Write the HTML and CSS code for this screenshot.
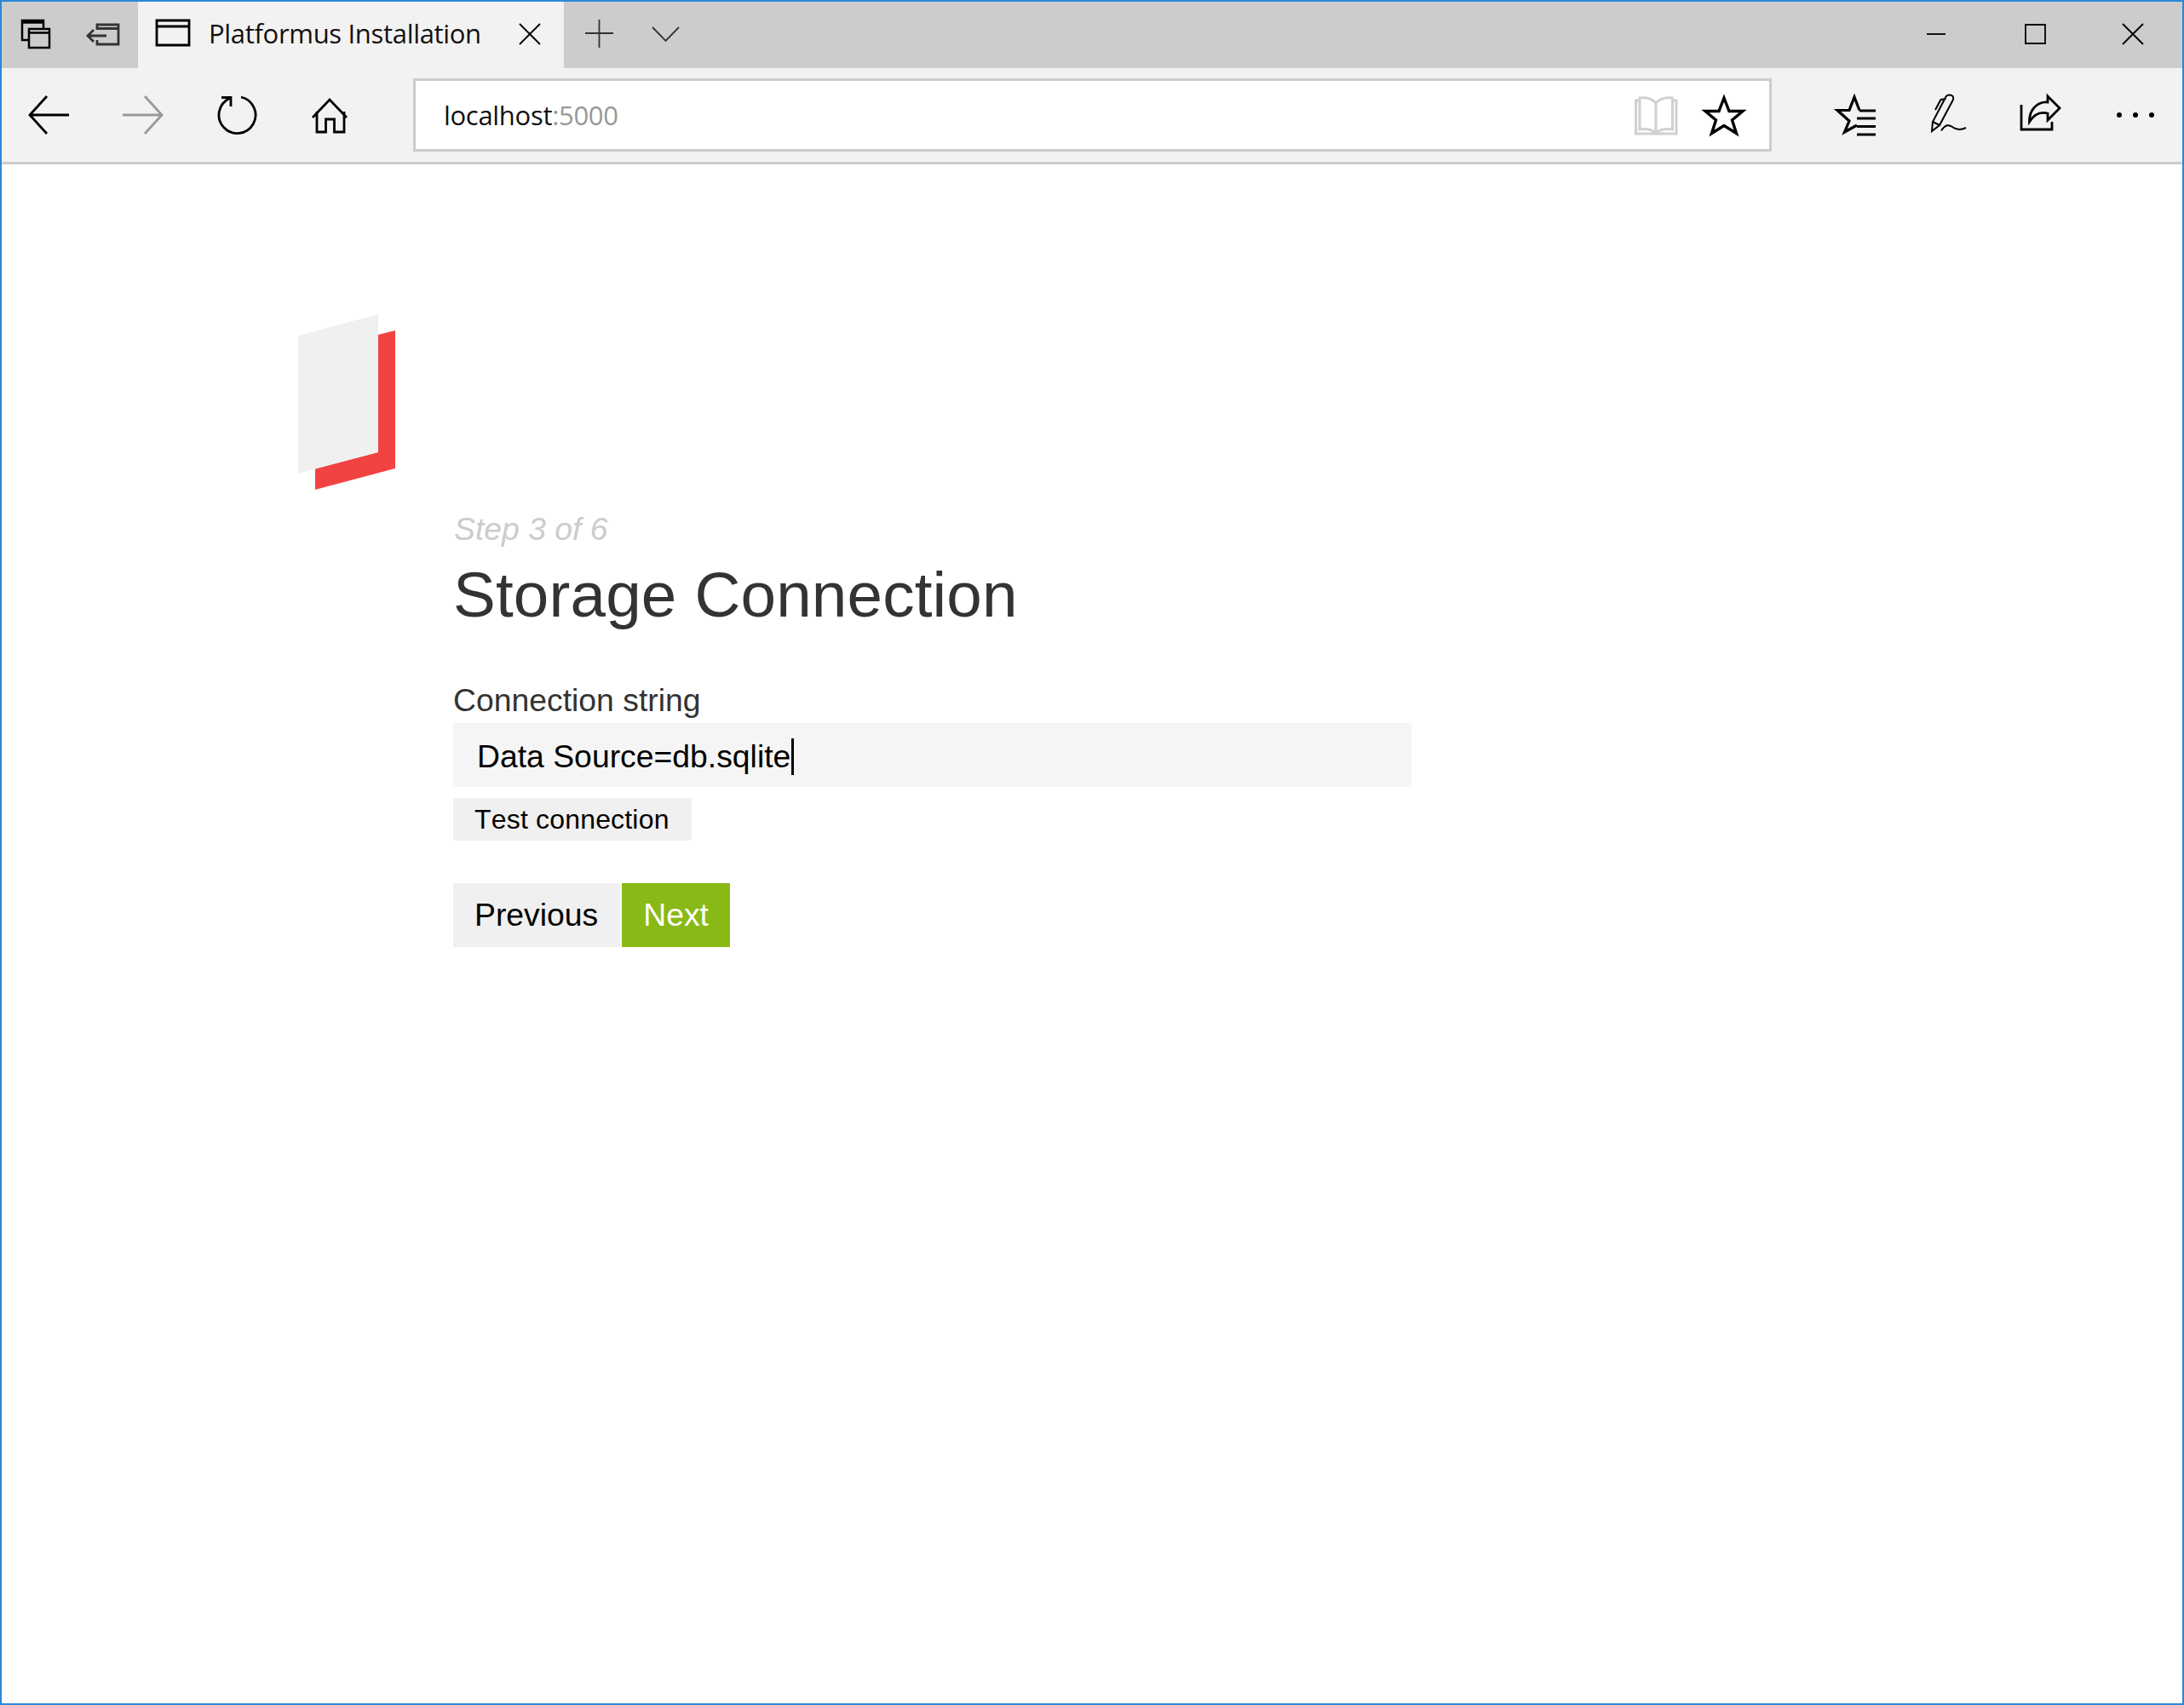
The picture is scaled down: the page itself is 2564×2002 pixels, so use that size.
FILE: index.html
```html
<!DOCTYPE html>
<html lang="en">
<head>
<meta charset="utf-8">
<title>Platformus Installation</title>
<link rel="stylesheet" href="styles.css">
</head>
<body>
<div class="window">
  <header class="tabbar">
    <div class="tab-tools">
      <svg class="ico ico-tabs" viewBox="24 2 36 78"><path d="M33 47H26V24H51V33M26 26.500H51"/><path d="M34 34H58V56H34ZM34 38.500H58"/></svg>
      <svg class="ico ico-aside" viewBox="100 2 42 78"><path class="soft" d="M114 35V29H139V52H114V47M114 33.500H139M125 42H103M110 35L103 42L110 49"/></svg>
    </div>
    <div class="tab">
      <svg class="ico ico-page" viewBox="182 2 42 78"><path d="M184 24H222V53H184ZM184 31H222"/></svg>
      <span class="tab-title">Platformus Installation</span>
      <svg class="ico ico-close" viewBox="609 2 26 78"><path class="thin" d="M610 28L634 52M634 28L610 52"/></svg>
    </div>
    <svg class="ico ico-plus" viewBox="686 2 35 78"><path class="thin soft" d="M687 39H720M703.500 23V56"/></svg>
    <svg class="ico ico-chev" viewBox="765 2 33 78"><path class="thin soft" d="M766 32L781.500 48L797 32"/></svg>
    <div class="win-controls">
      <svg class="ico ico-min" viewBox="2261 2 24 78"><path d="M2262 40H2284" class="thin"/></svg>
      <svg class="ico ico-max" viewBox="2376 2 26 78"><path d="M2378 29H2401V51H2378Z" class="thin"/></svg>
      <svg class="ico ico-x" viewBox="2491 2 26 78"><path class="thin" d="M2492 28L2516 52M2516 28L2492 52"/></svg>
    </div>
  </header>
  <nav class="toolbar">
    <svg class="ico ico-back" viewBox="33 80 49 110"><path d="M81 135H36M55 113L35 135L55 157"/></svg>
    <svg class="ico ico-fwd" viewBox="143 80 49 110"><path class="off" d="M144 135H189M170 113L190 135L170 157"/></svg>
    <svg class="ico ico-reload" viewBox="254 80 47 110"><path d="M269.500 115.500A21.500 21.500 0 1 0 283 114M260 114.500H271V125"/></svg>
    <svg class="ico ico-home" viewBox="365 80 46 110"><path d="M367 138L387 117L407 138M372 131V155H382.500V140H392.500V155H404V131"/></svg>
    <div class="addr">
      <span class="addr-text">localhost<span class="addr-port">:5000</span></span>
      <svg class="ico ico-book" viewBox="1917 95 54 80"><path class="dim" d="M1925 118H1920.500V157H1968V118H1963.500M1944 121C1939 115 1932 114 1925 115V152C1932 151 1939 152 1944 156C1949 152 1956 151 1963.500 152V115C1956 114 1949 115 1944 121ZM1944 121V156"/></svg>
      <svg class="ico ico-star" viewBox="1997 95 54 80"><path d="M2024 115L2030 130.500H2046L2033.500 141L2038.500 156.500L2024 147.500L2009.500 156.500L2014.500 141L2002 130.500H2018Z"/></svg>
    </div>
    <svg class="ico ico-favs" viewBox="2151 80 53 110"><path d="M2183 129.500L2177 114L2171 129.500H2157L2171 142L2165.500 155L2180 147M2183 130H2202M2180 139H2202M2180 148.500H2202M2180 158H2202"/></svg>
    <svg class="ico ico-pen" viewBox="2265 80 46 110"><path class="thin2" d="M2268 154L2269 143L2284.500 113.500C2286 111 2290 111 2292 112.500C2293.500 114 2293.500 116 2292.500 118L2277 147ZM2269 143L2277 147M2272 129L2278.500 117L2284.500 116M2279 153.500C2284 146 2288 146 2292 149C2297 153 2302 153 2308 150"/></svg>
    <svg class="ico ico-share" viewBox="2371 80 50 110"><path d="M2373 123V152H2409V143M2404 113L2418 127L2404 141V133C2396 131 2388 134 2382.500 143C2382 130 2391 119 2404 120Z"/></svg>
    <svg class="ico ico-dots" viewBox="2484 80 46 110"><circle cx="2488" cy="135" r="3"/><circle cx="2507" cy="135" r="3"/><circle cx="2526" cy="135" r="3"/></svg>
  </nav>
  <main class="page">
    <svg class="logo" viewBox="350 369 114 206"><path class="logo-red" d="M464 388L444 393V531L370 550V575L464 550Z"/><path class="logo-gray" d="M444 369L350 394V556L444 531Z"/></svg>
    <section class="form">
      <p class="step">Step 3 of 6</p>
      <h1 class="title">Storage Connection</h1>
      <label class="field-label">Connection string</label>
      <div class="input"><span class="input-value">Data Source=db.sqlite</span></div>
      <button class="btn btn-small" type="button">Test connection</button>
      <div class="actions">
        <button class="btn btn-prev" type="button">Previous</button>
        <button class="btn btn-primary" type="button">Next</button>
      </div>
    </section>
  </main>
</div>
</body>
</html>
```
FILE: styles.css
```css
* { box-sizing: border-box; }
html, body { margin: 0; padding: 0; }
body { background: #fff; font-family: "Liberation Sans", Arial, sans-serif; }
.window { width: 2564px; height: 2002px; border: 2px solid #2b88d8; overflow: hidden; display: flex; flex-direction: column; background: #fff; }

.ico { display: block; flex: none; overflow: visible; fill: none; stroke: #000; stroke-width: 2.8; stroke-miterlimit: 10; }
.ico .thin { stroke-width: 1.8; }
.ico .thin2 { stroke-width: 2; }
.ico .soft { stroke: #333; }
.ico .off { stroke: #999; }
.ico .dim { stroke: #d0d0d0; stroke-width: 3; }
.ico-tabs { stroke-width: 2.5; }
.ico-star { stroke-width: 3.4; }
.ico-favs { stroke-width: 3.2; }

.tabbar { height: 78px; display: flex; background: #ccc; flex: none; }
.tab-tools { width: 160px; display: flex; padding-left: 22px; }
.tabbar .ico { height: 78px; }
.ico-tabs { width: 36px; }
.ico-aside { width: 42px; margin-left: 40px; }
.tab { width: 500px; display: flex; background: #f2f2f2; padding-left: 20px; }
.ico-page { width: 42px; }
.tab-title { font: 400 31px/75px "Open Sans", "Noto Sans", sans-serif; color: #111; margin-left: 21px; letter-spacing: -.32px; width: 364px; white-space: nowrap; }
.ico-close { width: 26px; }
.ico-plus { width: 35px; margin-left: 24px; }
.ico-chev { width: 33px; margin-left: 44px; }
.win-controls { margin-left: auto; display: flex; padding-right: 45px; }
.ico-min { width: 24px; }
.ico-max { width: 26px; margin-left: 91px; }
.ico-x { width: 26px; margin-left: 89px; }

.toolbar { height: 113px; flex: none; display: flex; background: #f2f2f2; border-bottom: 3px solid #ccc; padding-left: 31px; }
.toolbar > .ico { height: 110px; }
.ico-back { width: 49px; }
.ico-fwd { width: 49px; margin-left: 61px; }
.ico-reload { width: 47px; margin-left: 62px; }
.ico-home { width: 46px; margin-left: 64px; }
.addr { width: 1595px; height: 86px; margin: 12px 0 0 74px; border: 3px solid #ccc; background: #fff; display: flex; padding-right: 26px; }
.addr .ico { height: 80px; }
.addr-text { font: 400 31px/80px "Open Sans", "Noto Sans", sans-serif; color: #111; padding-left: 33px; letter-spacing: -.3px; margin-right: auto; }
.addr-port { color: #999; }
.ico-book { width: 54px; }
.ico-star { width: 54px; margin-left: 26px; }
.ico-favs { width: 53px; margin-left: 71px; }
.ico-pen { width: 46px; margin-left: 61px; }
.ico-share { width: 50px; margin-left: 60px; }
.ico-dots { width: 46px; margin-left: 63px; fill: #000; stroke: none; }

.page { padding: 176px 0 0 348px; flex: 1; }
.logo { display: block; width: 114px; height: 206px; }
.logo-red { fill: #f14341; }
.logo-gray { fill: #f0f0f0; }
.form { margin-left: 182px; width: 1125px; font-kerning: none; }
.step { margin: 25px 0 0; padding-left: 1px; font: italic 400 37.33px/43px "Liberation Sans", Arial, sans-serif; color: #ccc; }
.title { margin: 12px 0 0; font: 400 74.67px/86px "Liberation Sans", Arial, sans-serif; letter-spacing: .15px; color: #333; }
.field-label { display: block; margin-top: 60px; font: 400 37.33px/43px "Liberation Sans", Arial, sans-serif; color: #333; }
.input { height: 75px; margin-top: 5px; background: #f5f5f5; padding-left: 28px; font: 400 37.33px/73px "Liberation Sans", Arial, sans-serif; color: #000; }
.input-value { display: inline-block; line-height: 43px; padding-right: 1px; border-right: 3px solid #000; vertical-align: middle; }
.btn { display: block; height: 75px; padding: 0 25px; border: 0; border-radius: 0; background: #f0f0f0; color: #000; font: 400 37.33px "Liberation Sans", Arial, sans-serif; font-kerning: none; }
.btn-prev { padding: 0 26px 0 25px; }
.btn-small { height: 50px; margin-top: 13px; padding: 0 26px 0 25px; font-size: 32px; letter-spacing: .18px; }
.actions { display: flex; gap: 2px; margin-top: 50px; }
.btn-primary { background: #89b916; color: #fff; }
```
